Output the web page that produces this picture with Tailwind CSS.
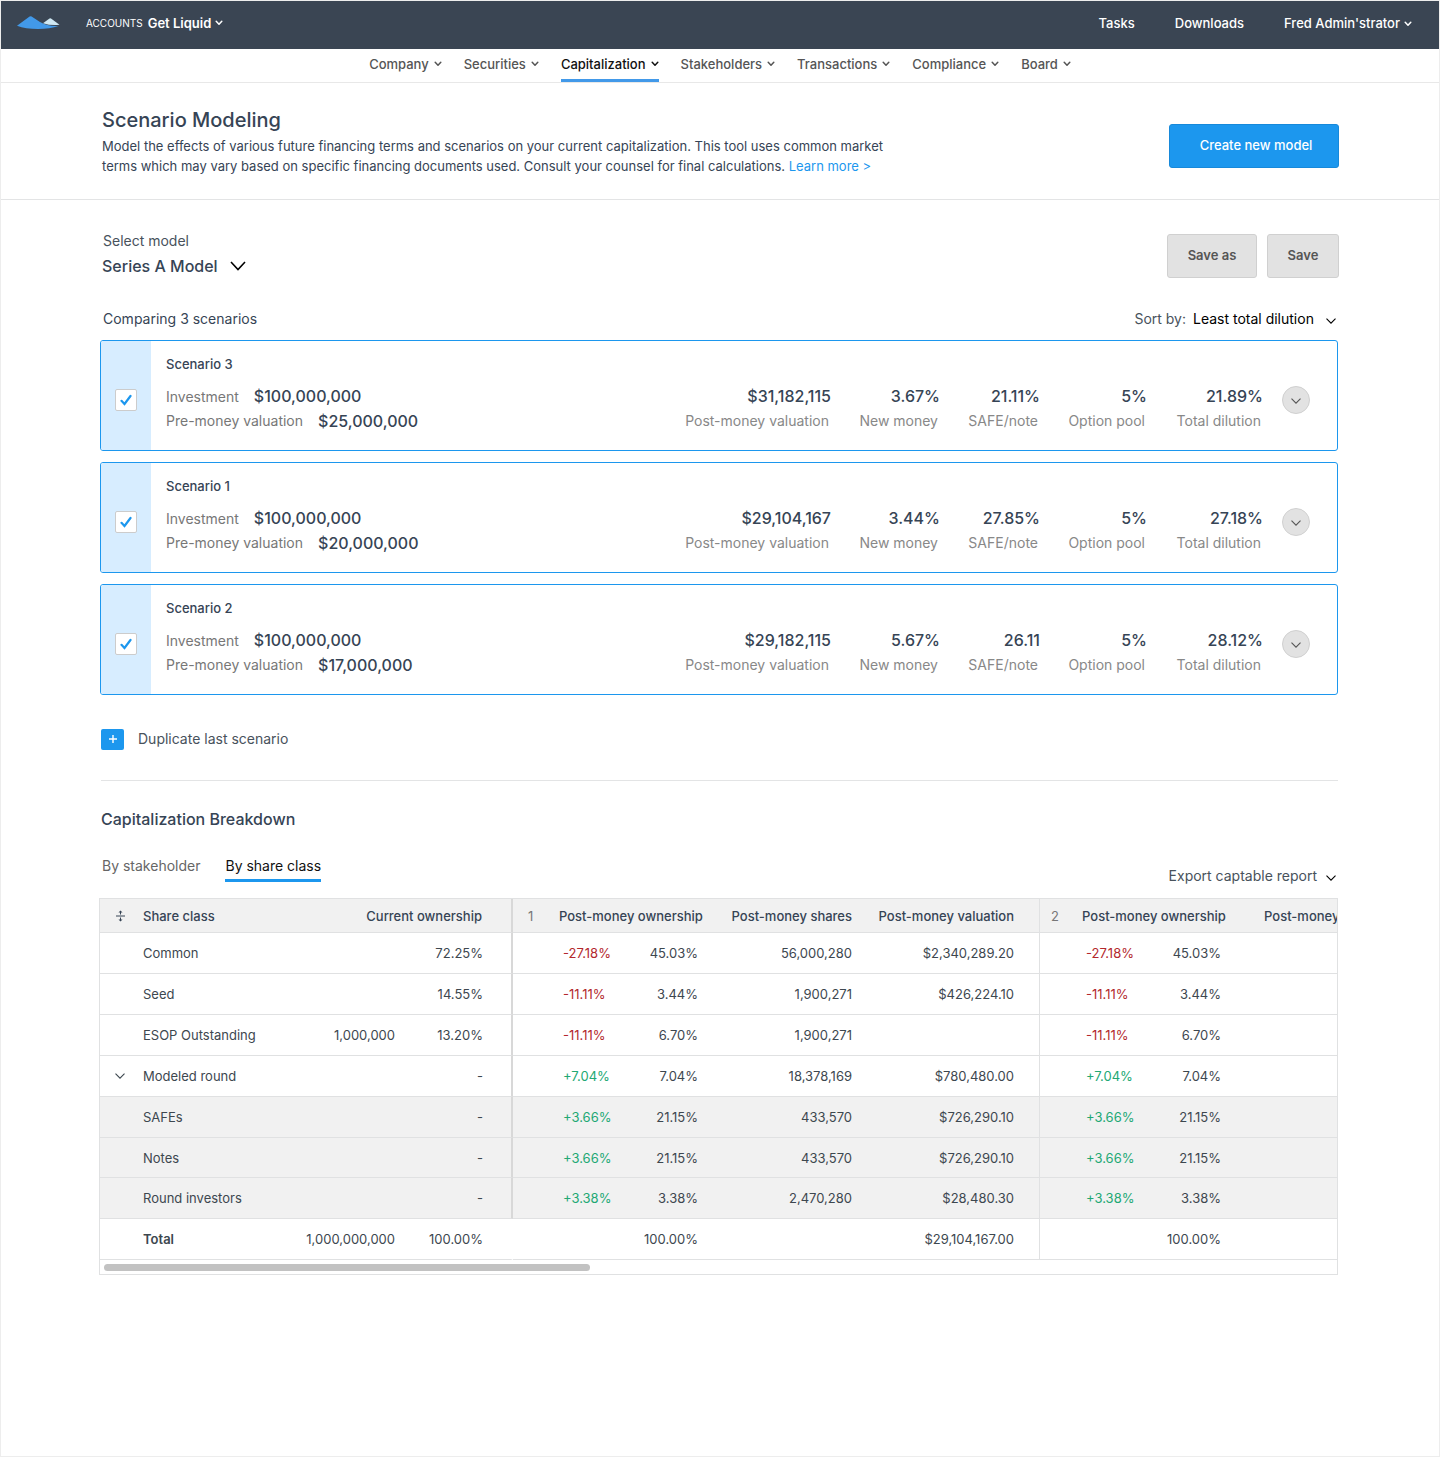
<!DOCTYPE html>
<html lang="en">
<head>
    <meta charset="UTF-8">
    <meta name="viewport" content="width=device-width, initial-scale=1.0">
    <title>Scenario Modeling</title>
    <!-- Tailwind CSS CDN -->
    <script src="https://cdn.jsdelivr.net/npm/@tailwindcss/browser@4"></script>
</head>
<body class="bg-white font-['Inter',sans-serif] text-[#364455]">

    <!-- Shared icons -->
    <svg class="hidden" aria-hidden="true">
        <symbol id="chevron-small" viewBox="0 0 8 6"><path d="M1.2 1.2 4 4.2 6.8 1.2" fill="none" stroke="currentColor" stroke-width="1.5" stroke-linecap="round" stroke-linejoin="round"/></symbol>
        <symbol id="chevron" viewBox="0 0 10 6"><path d="M.5.6 5 5.2 9.5.6" fill="none" stroke="currentColor" stroke-width="1.1"/></symbol>
        <symbol id="chevron-large" viewBox="0 0 16 10"><path d="M1 1 8 8.5 15 1" fill="none" stroke="currentColor" stroke-width="1.6"/></symbol>
    </svg>

    <div class="min-h-screen border border-[#ededed]">

        <!-- Top bar -->
        <header class="flex h-12 items-center justify-between bg-[#3a4553] pl-4 pr-[27px] pb-1 text-[13px] leading-5 font-medium text-white">
            <div class="flex items-center">
                <a href="#" aria-label="Home">
                    <svg class="h-[14px] w-[43px]" viewBox="0 0 43 14">
                        <path d="M26 7.2 32.5 2.4Q33.2 2 34 2.4L42.5 8.8Q34 9.8 26 7.2Z" fill="#cfe8f3"/>
                        <path d="M0 9.8 12.6.6Q13.6-.1 14.6.6L23 6.1Q31 10.6 41.5 9.9Q33 12.9 21 13Q8.500 13 0 9.800Z" fill="#4299e9"/>
                    </svg>
                </a>
                <button type="button" class="ml-[26px] flex items-center">
                    <span class="mr-[5px] text-[10px] font-normal">ACCOUNTS</span>
                    <span class="font-semibold">Get Liquid</span>
                    <svg class="ml-1 h-[6px] w-2"><use href="#chevron-small"/></svg>
                </button>
            </div>
            <div class="flex items-center gap-10">
                <a href="#">Tasks</a>
                <a href="#">Downloads</a>
                <button type="button" class="flex items-center">Fred Admin'strator <svg class="mt-px ml-1 h-[6px] w-2"><use href="#chevron-small"/></svg></button>
            </div>
        </header>

        <!-- Main navigation -->
        <nav class="flex h-[34px] justify-center gap-[22px] border-b border-[#e8e8e8] text-[13px] leading-[30px] font-medium text-[#555]">
            <button type="button" class="flex h-[33px] items-center pb-[3px]">Company <svg class="ml-[5px] h-[6px] w-2"><use href="#chevron-small"/></svg></button>
            <button type="button" class="flex h-[33px] items-center pb-[3px]">Securities <svg class="ml-[5px] h-[6px] w-2"><use href="#chevron-small"/></svg></button>
            <button type="button" class="flex h-[33px] items-center border-b-3 border-[#4299e9] text-[#111]">Capitalization <svg class="ml-[5px] h-[6px] w-2"><use href="#chevron-small"/></svg></button>
            <button type="button" class="flex h-[33px] items-center pb-[3px]">Stakeholders <svg class="ml-[5px] h-[6px] w-2"><use href="#chevron-small"/></svg></button>
            <button type="button" class="flex h-[33px] items-center pb-[3px]">Transactions <svg class="ml-[5px] h-[6px] w-2"><use href="#chevron-small"/></svg></button>
            <button type="button" class="flex h-[33px] items-center pb-[3px]">Compliance <svg class="ml-[5px] h-[6px] w-2"><use href="#chevron-small"/></svg></button>
            <button type="button" class="flex h-[33px] items-center pb-[3px]">Board <svg class="ml-[5px] h-[6px] w-2"><use href="#chevron-small"/></svg></button>
        </nav>

        <!-- Page title -->
        <section class="flex items-start justify-between border-b border-[#e3e4e5] pt-6 pr-[100px] pb-[23px] pl-[101px]">
            <div>
                <h1 class="text-xl leading-[26px] font-medium">Scenario Modeling</h1>
                <p class="mt-[3px] max-w-[820px] text-[13px] leading-5">Model the effects of various future financing terms and scenarios on your current capitalization. This tool uses common market<br>terms which may vary based on specific financing documents used. Consult your counsel for final calculations. <a href="#" class="text-[#1c97ee]">Learn more &gt;</a></p>
            </div>
            <button type="button" class="mt-[17px] h-11 w-[170px] rounded-[3px] border border-[#1789da] bg-[#1c97ee] pl-1 text-[13px] font-medium text-white">Create new model</button>
        </section>

        <main class="pr-[101px] pl-[99px]">

            <!-- Model picker -->
            <div class="-mr-px flex items-start justify-between pt-[30px]">
                <div class="pl-[2px]">
                    <label for="model" class="block pl-px text-sm leading-[22px] text-[#48525c]">Select model</label>
                    <div class="relative mt-[2px]">
                        <select id="model" class="block appearance-none pr-7 text-base leading-6 font-medium">
                            <option>Series A Model</option>
                        </select>
                        <svg class="pointer-events-none absolute top-[7px] right-0 h-[10px] w-4 text-black"><use href="#chevron-large"/></svg>
                    </div>
                </div>
                <div class="mt-1 flex gap-[10px] text-[13px] font-semibold text-[#555]">
                    <button type="button" class="h-11 w-[90px] rounded-[3px] border border-[#d0d0d0] bg-[#e2e2e2]">Save as</button>
                    <button type="button" class="h-11 w-[72px] rounded-[3px] border border-[#d0d0d0] bg-[#e2e2e2]">Save</button>
                </div>
            </div>

            <div class="mt-[29px] flex items-center justify-between pl-[3px] text-sm leading-6">
                <h2>Comparing 3 scenarios</h2>
                <div class="relative flex text-[#48525c]">
                    <label for="sort" class="mr-[7px]">Sort by:</label>
                    <select id="sort" class="appearance-none pr-6 text-black">
                        <option>Least total dilution</option>
                    </select>
                    <svg class="pointer-events-none absolute top-[11px] right-[2px] h-[6px] w-[10px] text-black"><use href="#chevron"/></svg>
                </div>
            </div>

            <!-- Scenario cards -->
            <div id="scenarios" class="mt-[9px] flex flex-col gap-[11px]"></div>

            <div class="mt-[33px] ml-px border-b border-[#e3e4e5] pb-[30px]">
                <button type="button" class="flex items-center text-sm leading-[22px] text-[#48525c]">
                    <span class="mr-[14px] flex h-[21px] w-[23px] items-center justify-center rounded-[2px] bg-[#1c97ee]">
                        <svg class="h-2 w-2" viewBox="0 0 8 8"><path d="M4 0v8M0 4h8" stroke="#fff" stroke-width="1.4"/></svg>
                    </span>
                    Duplicate last scenario
                </button>
            </div>

            <!-- Capitalization breakdown -->
            <h2 class="mt-[26px] pl-px text-base leading-6 font-medium">Capitalization Breakdown</h2>
            <div class="mt-6 flex items-start justify-between pl-[2px] text-sm leading-[22px]">
                <div class="flex gap-[25px]">
                    <button type="button" class="border-b-3 border-transparent pb-[2px] text-[#666]">By stakeholder</button>
                    <button type="button" class="border-b-3 border-[#1c97ee] pb-[2px] text-[#111]">By share class</button>
                </div>
                <button type="button" class="mt-[10px] mr-[2px] flex items-center gap-[9px] text-[#48525c]">Export captable report <svg class="mt-[3px] h-[6px] w-[10px] text-black"><use href="#chevron"/></svg></button>
            </div>

            <div class="mt-[11px] -ml-px overflow-hidden border border-[#e0e1e2]">
                <table class="w-[1282px] table-fixed border-separate border-spacing-0 text-[13px] leading-5 whitespace-nowrap text-[#3d474f] [&_td]:border-b [&_td]:border-[#e0e1e2] [&_td]:p-0 [&_th]:border-b [&_th]:border-[#e0e1e2] [&_th]:p-0">
                    <colgroup>
                        <col class="w-[43px]"><col class="w-[137px]"><col class="w-[115px]"><col class="w-[118px]">
                        <col class="w-[46px]"><col class="w-[69px]"><col class="w-[72px]"><col class="w-[152px]"><col class="w-[188px]">
                        <col class="w-[42px]"><col class="w-[69px]"><col class="w-[72px]"><col class="w-[159px]">
                    </colgroup>
                    <thead>
                        <tr class="h-[34px] bg-[#f1f1f1] text-[#364455] [&_th]:font-medium">
                            <th>
                                <button type="button" aria-label="Expand all rows" class="block pl-4">
                                    <svg class="h-3 w-[9px]" viewBox="0 0 9 12"><path d="M0 6h9M4.500 1v3.500M4.500 7.500V11" stroke="currentColor" fill="none"/><path d="M2.500 2.600 4.500.4l2 2.200zM2.500 9.400l2 2.200 2-2.200z" fill="currentColor"/></svg>
                                </button>
                            </th>
                            <th scope="col" class="text-left">Share class</th>
                            <th scope="col" colspan="2" class="border-r-2 border-r-[#d8d8d8]! pr-[29px]! text-right">Current ownership</th>
                            <th class="pl-[15px]! text-left font-normal! text-[#777]">1</th>
                            <th scope="col" colspan="2" class="text-right">Post-money ownership</th>
                            <th scope="col" class="text-right">Post-money shares</th>
                            <th scope="col" class="border-r pr-[25px]! text-right">Post-money valuation</th>
                            <th class="pl-[11px]! text-left font-normal! text-[#777]">2</th>
                            <th scope="col" colspan="2" class="text-right">Post-money ownership</th>
                            <th scope="col" class="pl-[41px]! text-left">Post-money shares</th>
                        </tr>
                    </thead>
                    <tbody id="breakdown"></tbody>
                </table>
                <!-- Horizontal scroll track -->
                <div class="h-[14px] px-1 pt-1"><div class="h-[7px] w-[486px] rounded-full bg-[#c2c2c2]"></div></div>
            </div>
        </main>
    </div>

    <script>
        const scenarios = [
            { name: 'Scenario 3', pre: '$25,000,000', post: '$31,182,115', fresh: '3.67%', safe: '21.11%', dilution: '21.89%' },
            { name: 'Scenario 1', pre: '$20,000,000', post: '$29,104,167', fresh: '3.44%', safe: '27.85%', dilution: '27.18%' },
            { name: 'Scenario 2', pre: '$17,000,000', post: '$29,182,115', fresh: '5.67%', safe: '26.11', dilution: '28.12%' }
        ];

        const stat = (value, label) => `
            <div class="flex flex-col-reverse text-right">
                <dt class="pr-[2px] text-sm leading-6 text-[#888] whitespace-nowrap">${label}</dt>
                <dd class="text-base leading-[25px] font-medium">${value}</dd>
            </div>`;

        document.getElementById('scenarios').innerHTML = scenarios.map((s, i) => `
            <article class="flex overflow-hidden rounded-[3px] border border-[#1c97ee]">
                <div class="flex w-[50px] items-center justify-center bg-[#d7edff] pt-[9px]">
                    <div class="relative h-[22px] w-[22px]">
                        <input type="checkbox" id="scenario-${i}" checked class="peer block h-[22px] w-[22px] appearance-none rounded-[2px] border border-[#ccc] bg-white">
                        <svg class="pointer-events-none absolute top-[5px] left-[5px] hidden h-3 w-3 peer-checked:block" viewBox="0 0 12 12"><path d="M1.500 6.800 4.500 10 10.500 2" fill="none" stroke="#1c97ee" stroke-width="2.200" stroke-linecap="round"/></svg>
                    </div>
                </div>
                <div class="flex-1 pt-[13px] pb-[17px] pl-[15px]">
                    <label for="scenario-${i}" class="block text-[13px] leading-5 font-medium">${s.name}</label>
                    <dl class="mt-[10px] leading-[25px]">
                        <div class="flex items-center gap-[15px]"><dt class="text-sm text-[#777]">Investment</dt><dd class="text-base leading-[25px] font-medium">$100,000,000</dd></div>
                        <div class="flex items-center gap-[15px]"><dt class="text-sm text-[#777]">Pre-money valuation</dt><dd class="text-base leading-[24px] font-medium">${s.pre}</dd></div>
                    </dl>
                </div>
                <dl class="grid grid-cols-[149px_109px_100px_107px_116px] content-end pb-[17px]">
                    ${stat(s.post, 'Post-money valuation')}
                    ${stat(s.fresh, 'New money')}
                    ${stat(s.safe, 'SAFE/note')}
                    ${stat('5%', 'Option pool')}
                    ${stat(s.dilution, 'Total dilution')}
                </dl>
                <div class="flex items-center pt-[9px] pr-[27px] pl-[19px]">
                    <button type="button" aria-label="Show ${s.name}" class="flex h-7 w-7 items-center justify-center rounded-full border border-[#d0d0d0] bg-[#e2e2e2] pt-[2px] text-[#555]">
                        <svg class="h-[6px] w-[10px]"><use href="#chevron"/></svg>
                    </button>
                </div>
            </article>`).join('');

        // name, current shares, current %, change, post %, post shares, post valuation
        const rows = [
            ['Common', '', '72.25%', '-27.18%', '45.03%', '56,000,280', '$2,340,289.20'],
            ['Seed', '', '14.55%', '-11.11%', '3.44%', '1,900,271', '$426,224.10'],
            ['ESOP Outstanding', '1,000,000', '13.20%', '-11.11%', '6.70%', '1,900,271', ''],
            ['Modeled round', '', '-', '+7.04%', '7.04%', '18,378,169', '$780,480.00'],
            ['SAFEs', '', '-', '+3.66%', '21.15%', '433,570', '$726,290.10'],
            ['Notes', '', '-', '+3.66%', '21.15%', '433,570', '$726,290.10'],
            ['Round investors', '', '-', '+3.38%', '3.38%', '2,470,280', '$28,480.30'],
            ['Total', '1,000,000,000', '100.00%', '', '100.00%', '', '$29,104,167.00']
        ];
        const nested = ['SAFEs', 'Notes', 'Round investors'];

        document.getElementById('breakdown').innerHTML = rows.map(([name, count, pct, change, post, shares, value]) => {
            const tone = change.startsWith('-') ? 'text-[#b3282d]' : 'text-[#22a874]';
            const total = name === 'Total';
            return `
            <tr class="${name === 'Notes' ? 'h-10' : 'h-[41px]'} ${nested.includes(name) ? 'bg-[#f1f1f1]' : ''}">
                <td>${name === 'Modeled round' ? '<button type="button" aria-label="Collapse modeled round" class="block pl-[15px]"><svg class="h-[6px] w-[10px]"><use href="#chevron"/></svg></button>' : ''}</td>
                <td class="${total ? 'font-semibold' : ''}">${name}</td>
                <td class="text-right">${count}</td>
                <td class="border-r-2 text-right pr-[28px]! ${total ? 'border-r-transparent!' : 'border-r-[#d8d8d8]!'}">${pct}</td>
                <td></td>
                <td class="pl-1! ${tone}">${change}</td>
                <td class="pr-[2px]! text-right">${post}</td>
                <td class="text-right">${shares}</td>
                <td class="border-r pr-[25px]! text-right">${value}</td>
                <td></td>
                <td class="pl-1! ${tone}">${change}</td>
                <td class="pr-[2px]! text-right">${post}</td>
                <td></td>
            </tr>`;
        }).join('');
    </script>
</body>
</html>
